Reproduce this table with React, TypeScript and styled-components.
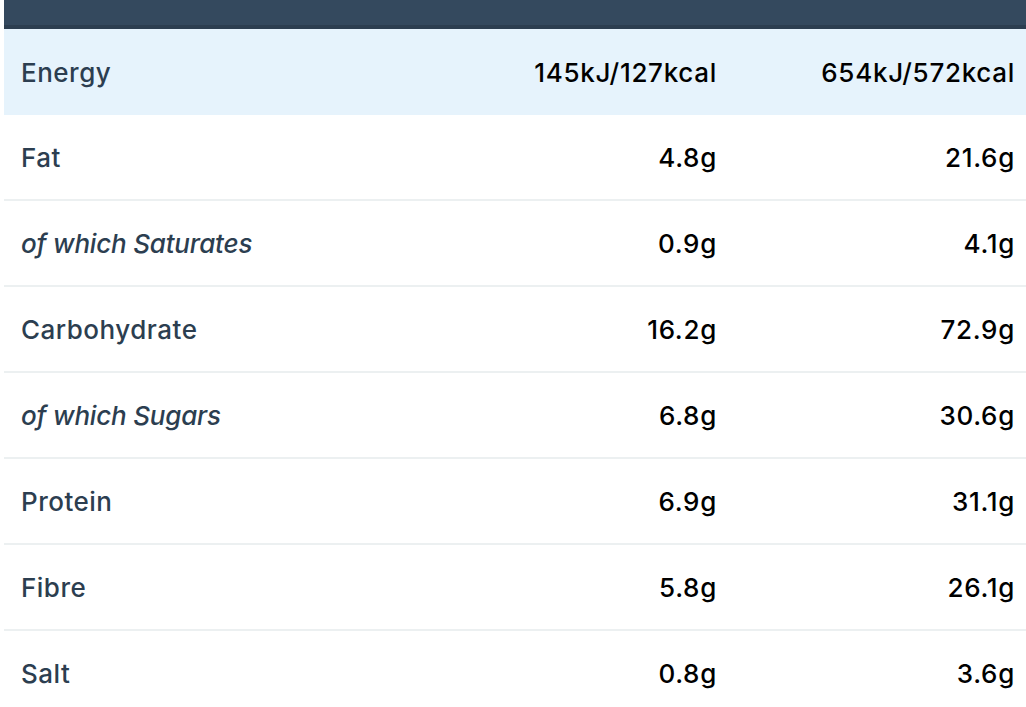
import styled, { createGlobalStyle } from 'styled-components';

const GlobalStyle = createGlobalStyle`
    html, body {
        margin: 0;
        padding: 0;
        background: #ffffff;
        overflow: hidden;
    }
    body {
        font-family: Inter, "Noto Sans", "Liberation Sans", sans-serif;
    }
`;

const TableStyles = styled.div`
    margin-left: 4px;
    width: 1022px;
`;

const HeaderBar = styled.div`
    height: 25px;
    background-color: #34495e;
    border-bottom: 4px solid #2c3e50;
`;

const RowStyles = styled.div<{ $highlight?: boolean }>`
    display: grid;
    grid-template-columns: 1fr 220px 298px;
    align-items: center;
    height: ${(p) => (p.$highlight ? '86px' : '84px')};
    background-color: ${(p) => (p.$highlight ? '#e6f3fc' : '#ffffff')};
    border-bottom: ${(p) => (p.$highlight ? 'none' : '2px solid #ecf0f1')};
`;

const LabelStyles = styled.div<{ $sub?: boolean }>`
    padding-left: 17px;
    font-size: 26px;
    letter-spacing: ${(p) => (p.$sub ? '-0.2px' : '0.5px')};
    font-weight: 500;
    color: #2c3e50;
    font-style: ${(p) => (p.$sub ? 'italic' : 'normal')};
`;

const ValueStyles = styled.div`
    padding-right: 11px;
    text-align: right;
    font-size: 26px;
    letter-spacing: 0.7px;
    font-weight: 500;
    color: #000000;
`;

interface Nutrient {
    label: string;
    per100: string;
    perPack: string;
    sub?: boolean;
}

const nutrients: Nutrient[] = [
    { label: 'Energy', per100: '145kJ/127kcal', perPack: '654kJ/572kcal' },
    { label: 'Fat', per100: '4.8g', perPack: '21.6g' },
    { label: 'of which Saturates', per100: '0.9g', perPack: '4.1g', sub: true },
    { label: 'Carbohydrate', per100: '16.2g', perPack: '72.9g' },
    { label: 'of which Sugars', per100: '6.8g', perPack: '30.6g', sub: true },
    { label: 'Protein', per100: '6.9g', perPack: '31.1g' },
    { label: 'Fibre', per100: '5.8g', perPack: '26.1g' },
    { label: 'Salt', per100: '0.8g', perPack: '3.6g' },
];

function App() {
    return (
        <>
            <GlobalStyle />
            <TableStyles>
                <HeaderBar />
                {nutrients.map((n, i) => (
                    <RowStyles key={n.label} $highlight={i === 0}>
                        <LabelStyles $sub={n.sub}>{n.label}</LabelStyles>
                        <ValueStyles>{n.per100}</ValueStyles>
                        <ValueStyles>{n.perPack}</ValueStyles>
                    </RowStyles>
                ))}
            </TableStyles>
        </>
    );
}

export default App;
